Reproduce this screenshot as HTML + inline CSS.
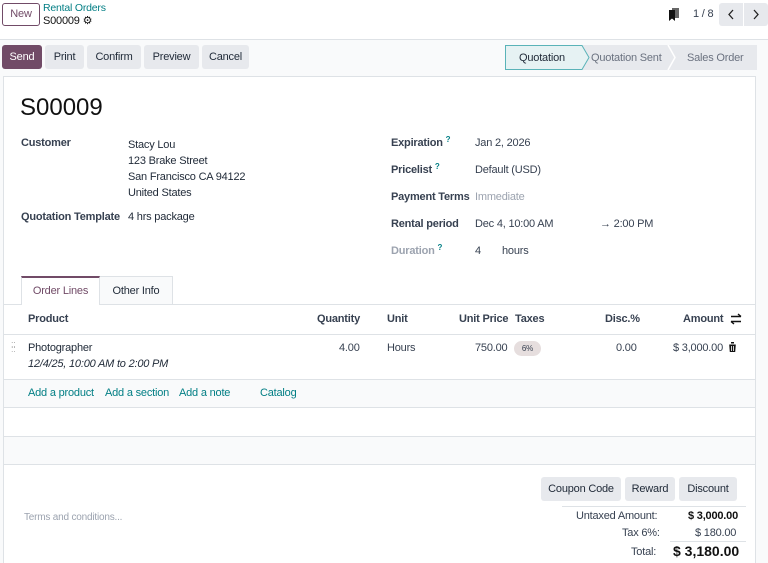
<!DOCTYPE html>
<html style="width:768px;height:563px;overflow:hidden"><head><meta charset="utf-8"><style>
*{box-sizing:border-box;margin:0;padding:0}
body{width:768px;height:563px;overflow:hidden;background:#f9fafb;font-family:"Liberation Sans",sans-serif;font-size:11px;color:#374151;position:relative;letter-spacing:-0.2px}
.a{position:absolute;white-space:nowrap}
.btn{position:absolute;height:24px;line-height:24px;text-align:center;background:#e7e9ed;border-radius:3px;color:#1f2937;font-size:11px}
.lbl{font-weight:bold;color:#374151}
.teal{color:#017e84}
.q{color:#017e84;font-size:8px;position:relative;top:-4px;line-height:0}
</style></head><body>
<div class="a" style="left:0;top:0;width:768px;height:40px;background:#fff;border-bottom:1px solid #dee2e6"></div>
<div class="a" style="left:2px;top:3px;width:38px;height:23px;border:1px solid #714b67;border-radius:3px;color:#714b67;text-align:center;line-height:21px">New</div>
<div class="a teal" style="left:43px;top:2px;font-size:10.5px">Rental Orders</div>
<div class="a" style="left:43px;top:14px;color:#111">S00009 <span style="font-size:11px">⚙</span></div>
<div class="a" style="left:669px;top:8px;width:10px;height:13px"><svg width="10" height="13"><rect x="3" y="0" width="7" height="10" fill="#666"/><path d="M0 2h6v11l-3-2.5L0 13z" fill="#111"/></svg></div>
<div class="a" style="left:693px;top:8px;color:#374151">1 / 8</div>
<div class="btn" style="left:719px;top:3px;width:24px;height:23px;border-radius:3px 0 0 3px"><svg width="24" height="23"><path d="M14 7l-4 4.5 4 4.5" fill="none" stroke="#222" stroke-width="1.3"/></svg></div>
<div class="btn" style="left:744px;top:3px;width:24px;height:23px;border-radius:0 3px 3px 0"><svg width="24" height="23"><path d="M10 7l4 4.5-4 4.5" fill="none" stroke="#222" stroke-width="1.3"/></svg></div>

<div class="btn" style="left:2px;top:45px;width:40px;background:#714b67;color:#fff">Send</div>
<div class="btn" style="left:45px;top:45px;width:39px">Print</div>
<div class="btn" style="left:87px;top:45px;width:54px">Confirm</div>
<div class="btn" style="left:144px;top:45px;width:55px">Preview</div>
<div class="btn" style="left:202px;top:45px;width:47px">Cancel</div>
<svg class="a" style="left:505px;top:45px" width="252" height="25">
<rect x="0" y="0" width="252" height="25" fill="#e7e9ed"/>
<path d="M0.5 0.5H77l7 12-7 12H0.5z" fill="#e6f2f3" stroke="#5ab3b8"/>
<path d="M163 0l7 12.5-7 12.5" fill="none" stroke="#fff" stroke-width="1.5"/>
<text x="14" y="16" font-family="Liberation Sans" font-size="11" fill="#1f2937">Quotation</text>
<text x="86" y="16" font-family="Liberation Sans" font-size="11" fill="#6b7280">Quotation Sent</text>
<text x="182" y="16" font-family="Liberation Sans" font-size="11" fill="#6b7280">Sales Order</text>
</svg>

<div class="a" style="left:3px;top:76px;width:753px;height:487px;background:#fff;border:1px solid #dee2e6;border-bottom:none"></div>
<div class="a" style="left:20px;top:94px;font-size:24px;color:#111;letter-spacing:0">S00009</div>
<div class="a lbl" style="left:21px;top:137px">Customer</div>
<div class="a" style="left:128px;top:137px;line-height:16px;color:#1f2937">Stacy Lou<br>123 Brake Street<br>San Francisco CA 94122<br>United States</div>
<div class="a lbl" style="left:21px;top:211px">Quotation Template</div>
<div class="a" style="left:128px;top:211px;color:#1f2937">4 hrs package</div>
<div class="a lbl" style="left:391px;top:137px">Expiration <span class="q">?</span></div>
<div class="a" style="left:475px;top:137px">Jan 2, 2026</div>
<div class="a lbl" style="left:391px;top:164px">Pricelist <span class="q">?</span></div>
<div class="a" style="left:475px;top:164px">Default (USD)</div>
<div class="a lbl" style="left:391px;top:191px">Payment Terms</div>
<div class="a" style="left:475px;top:191px;color:#9ca3af">Immediate</div>
<div class="a lbl" style="left:391px;top:218px">Rental period</div>
<div class="a" style="left:475px;top:218px">Dec 4, 10:00 AM</div>
<div class="a" style="left:600px;top:218px">→ 2:00 PM</div>
<div class="a" style="left:391px;top:245px;color:#9ca3af;font-weight:bold">Duration <span class="q">?</span></div>
<div class="a" style="left:475px;top:245px">4</div>
<div class="a" style="left:502px;top:245px">hours</div>

<div class="a" style="left:4px;top:304px;width:751px;border-top:1px solid #dee2e6"></div>
<div class="a" style="left:21px;top:276px;width:79px;height:29px;background:#fff;border:1px solid #dee2e6;border-top:2px solid #714b67;border-bottom:none;color:#714b67;text-align:center;line-height:27px">Order Lines</div>
<div class="a" style="left:100px;top:276px;width:73px;height:28px;background:#f9fafb;border:1px solid #dee2e6;border-left:none;border-bottom:none;text-align:center;line-height:28px;color:#1f2937">Other Info</div>

<div class="a lbl" style="left:28px;top:313px">Product</div>
<div class="a lbl" style="left:317px;top:313px">Quantity</div>
<div class="a lbl" style="left:387px;top:313px">Unit</div>
<div class="a lbl" style="left:459px;top:313px">Unit Price</div>
<div class="a lbl" style="left:515px;top:313px">Taxes</div>
<div class="a lbl" style="left:605px;top:313px">Disc.%</div>
<div class="a lbl" style="left:683px;top:313px">Amount</div>
<svg class="a" style="left:730px;top:313px" width="12" height="12"><path d="M1 3.5h10M8 1l3 2.5M1 8.5h10M4 11L1 8.5" fill="none" stroke="#111" stroke-width="1.4"/></svg>
<div class="a" style="left:4px;top:334px;width:751px;border-top:1px solid #dee2e6"></div>
<div class="a" style="left:11px;top:342px;color:#aaa;font-size:9px;line-height:5px">::<br>::</div>
<div class="a" style="left:28px;top:342px;color:#1f2937">Photographer</div>
<div class="a" style="left:28px;top:358px;font-style:italic;color:#1f2937">12/4/25, 10:00 AM to 2:00 PM</div>
<div class="a" style="left:339px;top:342px">4.00</div>
<div class="a" style="left:387px;top:342px">Hours</div>
<div class="a" style="left:475px;top:342px">750.00</div>
<div class="a" style="left:514px;top:341px;width:27px;height:15px;background:#e6dede;border-radius:8px;font-size:8px;text-align:center;line-height:15px">6%</div>
<div class="a" style="left:616px;top:342px">0.00</div>
<div class="a" style="left:673px;top:342px">$ 3,000.00</div>
<svg class="a" style="left:728px;top:342px" width="9" height="10"><path d="M0 1.5h9M3 1.5V0h3v1.5M1.2 2.5h6.6l-.6 7.5H1.8z" fill="#111"/><path d="M3.5 4v5M5.5 4v5" stroke="#fff" stroke-width=".8"/></svg>
<div class="a" style="left:4px;top:379px;width:751px;height:29px;background:#f9fafb;border-top:1px solid #dee2e6;border-bottom:1px solid #dee2e6"></div>
<div class="a teal" style="left:28px;top:387px">Add a product</div>
<div class="a teal" style="left:105px;top:387px">Add a section</div>
<div class="a teal" style="left:179px;top:387px">Add a note</div>
<div class="a teal" style="left:260px;top:387px">Catalog</div>
<div class="a" style="left:4px;top:436px;width:751px;height:29px;background:#f9fafb;border-top:1px solid #dee2e6;border-bottom:1px solid #dee2e6"></div>

<div class="btn" style="left:541px;top:477px;width:80px">Coupon Code</div>
<div class="btn" style="left:625px;top:477px;width:50px">Reward</div>
<div class="btn" style="left:679px;top:477px;width:58px">Discount</div>
<div class="a" style="left:24px;top:512px;color:#9ca3af;font-size:10px">Terms and conditions...</div>
<div class="a" style="left:562px;top:506px;width:184px;border-top:1px solid #dee2e6"></div>
<div class="a" style="left:576px;top:510px">Untaxed Amount:</div>
<div class="a" style="left:688px;top:510px;font-weight:bold;color:#111">$ 3,000.00</div>
<div class="a" style="left:622px;top:527px">Tax 6%:</div>
<div class="a" style="left:695px;top:527px">$ 180.00</div>
<div class="a" style="left:670px;top:541px;width:76px;border-top:1px solid #dee2e6"></div>
<div class="a" style="left:631px;top:546px">Total:</div>
<div class="a" style="left:673px;top:543px;font-size:14px;font-weight:bold;color:#111;letter-spacing:0">$ 3,180.00</div>
</body></html>
